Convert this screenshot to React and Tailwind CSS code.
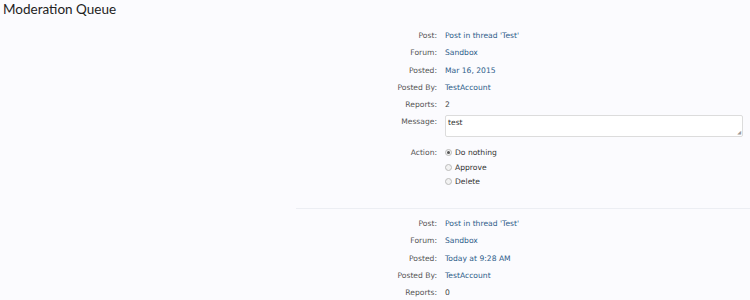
const font = { fontFamily: '"DejaVu Sans", Verdana, sans-serif' };

function Row({ label, children, className = '' }) {
  return (
    <div className={`flex items-start ${className}`}>
      <div className="w-[437px] shrink-0 text-right text-[#555]">{label}</div>
      <div className="pl-[8px] flex-1">{children}</div>
    </div>
  );
}

function Radio({ checked, label }) {
  return (
    <div className="flex items-center h-[14.5px]">
      <span className="w-[7px] h-[7px] rounded-full border border-[#bbb] bg-[#f2f2f2] flex items-center justify-center mr-[3px]">
        {checked && <span className="w-[3px] h-[3px] rounded-full bg-[#555]" />}
      </span>
      <span className="text-[#333]">{label}</span>
    </div>
  );
}

function Item({ posted, reports, withForm }) {
  return (
    <div className="text-[7.6px] leading-[17.3px]" style={font}>
      <Row label="Post:"><span className="text-[#2e5d8a]">Post in thread 'Test'</span></Row>
      <Row label="Forum:"><span className="text-[#2e5d8a]">Sandbox</span></Row>
      <Row label="Posted:"><span className="text-[#2e5d8a]">{posted}</span></Row>
      <Row label="Posted By:"><span className="text-[#2e5d8a]">TestAccount</span></Row>
      <Row label="Reports:"><span className="text-[#444]">{reports}</span></Row>
      {withForm && (
        <>
          <Row label="Message:">
            <div className="w-[298px] h-[22px] mt-[2px] bg-white border border-[#dcdcdc] rounded-[2px] px-[2px] leading-[13px] text-[#333] relative">
              test
              <span className="absolute right-[1px] bottom-[1px] text-[5px] leading-none text-[#999]">◢</span>
            </div>
          </Row>
          <Row label="Action:" className="mt-[7px]">
            <div className="pt-[1px]">
              <Radio checked label="Do nothing" />
              <Radio label="Approve" />
              <Radio label="Delete" />
            </div>
          </Row>
        </>
      )}
    </div>
  );
}

export default function App() {
  return (
    <div className="w-[750px] h-[300px] bg-[#fbfbfe] overflow-hidden">
      <h1 className="text-[13.5px] leading-[18px] pl-[3px] text-[#222]" style={{ fontFamily: 'Lato, sans-serif' }}>
        Moderation Queue
      </h1>
      <div className="pt-[9px]">
        <Item posted="Mar 16, 2015" reports="2" withForm />
      </div>
      <div className="ml-[296px] mt-[19px] border-t border-[#eceef3]" />
      <div className="pt-[6px]">
        <Item posted="Today at 9:28 AM" reports="0" />
      </div>
    </div>
  );
}
